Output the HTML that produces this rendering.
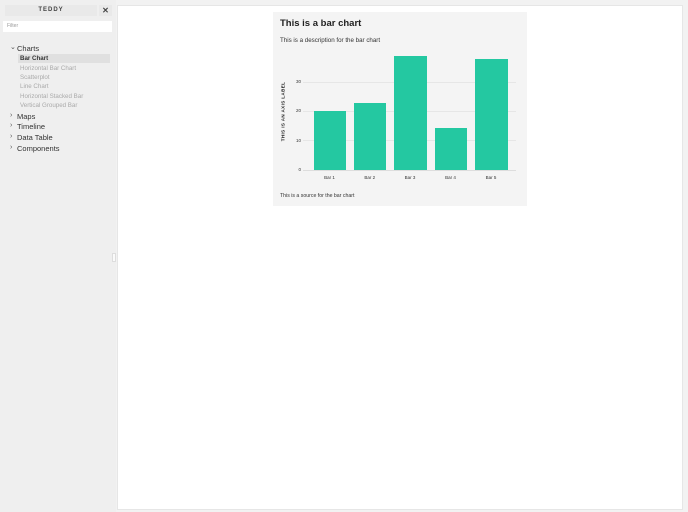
<!DOCTYPE html>
<html><head><style>
*{margin:0;padding:0;box-sizing:border-box}
body{width:688px;height:512px;background:#f2f2f2;font-family:"Liberation Sans",sans-serif;position:relative;overflow:hidden}
.a{position:absolute}
.side{left:0;top:0;width:116px;height:512px;background:#efefef}
.nav{font-size:7.5px;color:#333;white-space:nowrap;left:17px}
.chev{font-size:7px;color:#555;left:10px}
.sub{font-size:6.2px;color:#aaa;white-space:nowrap;left:20px}
.main{left:117px;top:5px;width:566px;height:505px;background:#fff;border:1px solid #e6e6e6}
.card{left:273px;top:12px;width:254px;height:194px;background:#f4f4f4}
.t{font-size:6.2px;color:#333;white-space:nowrap}
.bar{background:#24c8a1;width:32.5px}
.grid{left:303px;width:213px;height:1px;background:#e6e6e6}
.tick{font-size:4.5px;color:#333;width:10px;text-align:right;left:291px}
.bl{font-size:4.5px;color:#333;width:32px;text-align:center;top:175px}
</style></head><body>
<div class="a side"></div>
<div class="a" style="left:5px;top:5px;width:92px;height:11px;background:#e9e9e9;font-size:6px;font-weight:bold;letter-spacing:1px;color:#444;text-align:center;line-height:11px">TEDDY</div>
<div class="a" style="left:99px;top:5px;width:13px;height:11px;background:#e9e9e9;font-size:8px;font-weight:bold;color:#444;text-align:center;line-height:11px">✕</div>
<div class="a" style="left:3px;top:21px;width:109px;height:11px;background:#fff;font-size:5px;color:#999;padding-left:4px;line-height:11px">Filter</div>
<div class="a chev" style="top:43px">⌄</div><div class="a nav" style="top:44px">Charts</div>
<div class="a" style="left:18px;top:54px;width:92px;height:9px;background:#e0e0e0"></div>
<div class="a" style="left:20px;top:55px;font-size:6.2px;font-weight:bold;color:#333">Bar Chart</div>
<div class="a sub" style="top:64.5px">Horizontal Bar Chart</div>
<div class="a sub" style="top:74px">Scatterplot</div>
<div class="a sub" style="top:83px">Line Chart</div>
<div class="a sub" style="top:92.5px">Horizontal Stacked Bar</div>
<div class="a sub" style="top:102px">Vertical Grouped Bar</div>
<div class="a chev" style="top:111.5px">›</div><div class="a nav" style="top:111.5px">Maps</div>
<div class="a chev" style="top:122px">›</div><div class="a nav" style="top:122px">Timeline</div>
<div class="a chev" style="top:133px">›</div><div class="a nav" style="top:133px">Data Table</div>
<div class="a chev" style="top:143.5px">›</div><div class="a nav" style="top:143.5px">Components</div>
<div class="a" style="left:112px;top:253px;width:4px;height:9px;background:#fafafa;border:1px solid #ddd"></div>
<div class="a main"></div>
<div class="a card"></div>
<div class="a" style="left:280px;top:18px;font-size:9.5px;font-weight:bold;color:#222">This is a bar chart</div>
<div class="a t" style="left:280px;top:37px">This is a description for the bar chart</div>
<div class="a grid" style="top:82px"></div>
<div class="a grid" style="top:111px"></div>
<div class="a grid" style="top:140px"></div>
<div class="a grid" style="top:170px;background:#ddd"></div>
<div class="a tick" style="top:79px">30</div>
<div class="a tick" style="top:108px">20</div>
<div class="a tick" style="top:137.5px">10</div>
<div class="a tick" style="top:167px">0</div>
<div class="a" style="left:253px;top:109px;width:60px;text-align:center;font-size:4.5px;font-weight:bold;letter-spacing:.4px;color:#222;transform:rotate(-90deg)">THIS IS AN AXIS LABEL</div>
<div class="a bar" style="left:313.5px;top:111px;height:59px"></div>
<div class="a bar" style="left:353.8px;top:102.7px;height:67.3px"></div>
<div class="a bar" style="left:394px;top:55.7px;height:114.3px"></div>
<div class="a bar" style="left:434.5px;top:128px;height:42px"></div>
<div class="a bar" style="left:475px;top:58.7px;height:111.3px"></div>
<div class="a bl" style="left:313.5px">Bar 1</div>
<div class="a bl" style="left:353.8px">Bar 2</div>
<div class="a bl" style="left:394px">Bar 3</div>
<div class="a bl" style="left:434.5px">Bar 4</div>
<div class="a bl" style="left:475px">Bar 5</div>
<div class="a" style="left:280px;top:193px;font-size:5.2px;color:#333">This is a source for the bar chart</div>
</body></html>
